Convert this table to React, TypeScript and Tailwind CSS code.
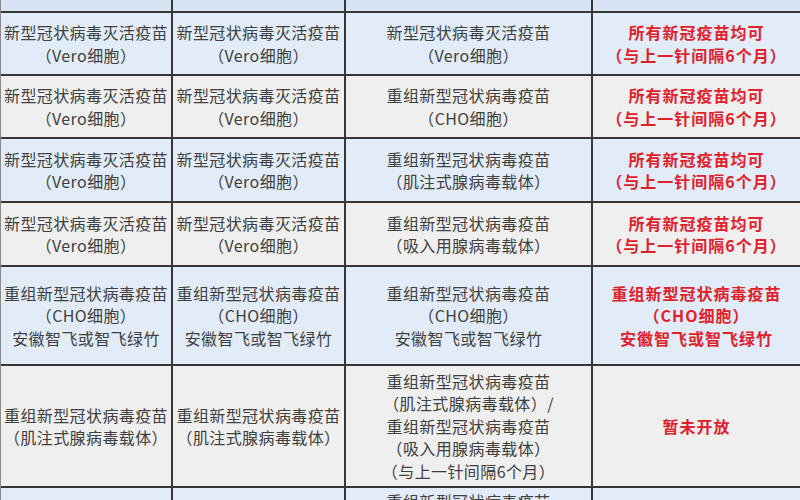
import React from "react";

type Cell = { lines: string[]; red?: boolean };
type Row = { h: number; bg: string; cells: Cell[]; top?: boolean };

const vero: Cell = { lines: ["新型冠状病毒灭活疫苗", "（Vero细胞）"] };
const redAll: Cell = { lines: ["所有新冠疫苗均可", "（与上一针间隔6个月）"], red: true };
const cho3: Cell = { lines: ["重组新型冠状病毒疫苗", "（CHO细胞）", "安徽智飞或智飞绿竹"] };
const ad: Cell = { lines: ["重组新型冠状病毒疫苗", "（肌注式腺病毒载体）"] };

const BLUE = "bg-[#e1ecf8]";
const GRAY = "bg-[#efefef]";

const rows: Row[] = [
  { h: 11, bg: "bg-[#d6e4f3]", cells: [{ lines: [] }, { lines: [] }, { lines: [] }, { lines: [] }] },
  { h: 61, bg: BLUE, cells: [vero, vero, vero, redAll] },
  { h: 61, bg: GRAY, cells: [vero, vero, { lines: ["重组新型冠状病毒疫苗", "（CHO细胞）"] }, redAll] },
  { h: 62, bg: BLUE, cells: [vero, vero, { lines: ["重组新型冠状病毒疫苗", "（肌注式腺病毒载体）"] }, redAll] },
  { h: 62, bg: GRAY, cells: [vero, vero, { lines: ["重组新型冠状病毒疫苗", "（吸入用腺病毒载体）"] }, redAll] },
  { h: 97, bg: BLUE, cells: [cho3, cho3, cho3, { ...cho3, red: true }] },
  {
    h: 120,
    bg: GRAY,
    cells: [
      ad,
      ad,
      {
        lines: [
          "重组新型冠状病毒疫苗",
          "（肌注式腺病毒载体）/",
          "重组新型冠状病毒疫苗",
          "（吸入用腺病毒载体）",
          "（与上一针间隔6个月）",
        ],
      },
      { lines: ["暂未开放"], red: true },
    ],
  },
  {
    h: 120,
    bg: BLUE,
    top: true,
    cells: [{ lines: [] }, { lines: [] }, { lines: ["重组新型冠状病毒疫苗", "（吸入用腺病毒载体）"] }, { lines: [] }],
  },
];

export default function App() {
  return (
    <div
      className="w-[800px] h-[500px] overflow-hidden bg-white"
      style={{ fontFamily: '"Noto Sans CJK SC", "Noto Sans", sans-serif' }}
    >
      <div className="border-l border-[#8a8a8a] bg-[#363636] flex flex-col gap-[2px]">
        {rows.map((r, ri) => (
          <div key={ri} className="grid grid-cols-[170px_171px_245px_1fr] gap-[2px]" style={{ height: r.h }}>
            {r.cells.map((c, ci) => (
              <div
                key={ci}
                className={`${r.bg} flex flex-col ${r.top ? "justify-start pt-[2px]" : "justify-center"} items-center text-center text-[16px] leading-[22.5px] whitespace-nowrap ${
                  c.red ? "text-[#e2202a] font-bold tracking-[1px]" : "text-[#404040] tracking-[0.4px]"
                }`}
              >
                {c.lines.map((l, li) => (
                  <div key={li}>{l}</div>
                ))}
              </div>
            ))}
          </div>
        ))}
      </div>
    </div>
  );
}
